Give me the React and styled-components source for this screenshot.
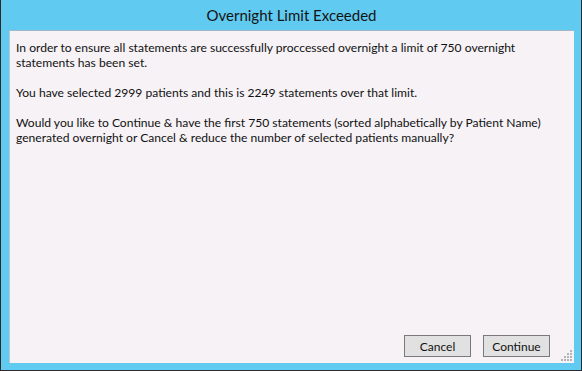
import React from 'react';
import styled, { createGlobalStyle } from 'styled-components';

const GlobalStyle = createGlobalStyle`
    html, body {
        margin: 0;
        padding: 0;
        background: #ffffff;
    }
`;

const Window = styled.div`
    box-sizing: border-box;
    width: 582px;
    height: 371px;
    display: flex;
    flex-direction: column;
    background: #60caf0;
    border-left: 1px solid #2b2b2b;
    border-right: 1px solid #2b2b2b;
    border-bottom: 1px solid #2b2b2b;
    padding: 0 7px 7px 8px;
    font-family: Lato, "Open Sans", sans-serif;
`;

const TitleBar = styled.div`
    height: 30px;
    display: flex;
    align-items: center;
    justify-content: center;
    font-size: 15px;
    color: #141414;
    padding-bottom: 1px;
    box-sizing: border-box;
`;

const Panel = styled.div`
    flex: 1;
    position: relative;
    display: flex;
    flex-direction: column;
    background: #f6f2f6;
    border-top: 1px solid #9fb7c6;
    border-left: 1px solid #b8c6cf;
`;

const Message = styled.div`
    flex: 1;
    padding: 9px 0 0 6px;
    font-size: 12.1px;
    line-height: 15px;
    color: #111111;
`;

const Para = styled.p`
    margin: 0 0 15px 0;
`;

const ButtonRow = styled.div`
    display: flex;
    justify-content: flex-end;
    gap: 12px;
    padding: 0 24px 6px 0;
`;

const Button = styled.button`
    width: 67px;
    height: 22px;
    box-sizing: border-box;
    background: #e1e1e1;
    border: 1px solid #7a7a7a;
    border-radius: 0;
    font-family: inherit;
    font-size: 12px;
    color: #111111;
    padding: 0;
`;

const Grip = styled.svg`
    position: absolute;
    right: 1px;
    bottom: 1px;
`;

const dots = [[9, 0], [6, 3], [9, 3], [3, 6], [6, 6], [9, 6], [0, 9], [3, 9], [6, 9], [9, 9]];

const App = () => {
    return (
        <>
            <GlobalStyle />
            <Window>
                <TitleBar>Overnight Limit Exceeded</TitleBar>
                <Panel>
                    <Message>
                        <Para>
                            In order to ensure all statements are successfully proccessed overnight a limit of 750 overnight<br />
                            statements has been set.
                        </Para>
                        <Para>You have selected 2999 patients and this is 2249 statements over that limit.</Para>
                        <Para>
                            Would you like to Continue &amp; have the first 750 statements (sorted alphabetically by Patient Name)<br />
                            generated overnight or Cancel &amp; reduce the number of selected patients manually?
                        </Para>
                    </Message>
                    <ButtonRow>
                        <Button>Cancel</Button>
                        <Button>Continue</Button>
                    </ButtonRow>
                    <Grip width="12" height="12" viewBox="0 0 12 12">
                        {dots.map(([x, y], i) => (
                            <rect key={i} x={x} y={y} width="2" height="2" fill="#b4b4b4" />
                        ))}
                    </Grip>
                </Panel>
            </Window>
        </>
    );
};

export default App;
